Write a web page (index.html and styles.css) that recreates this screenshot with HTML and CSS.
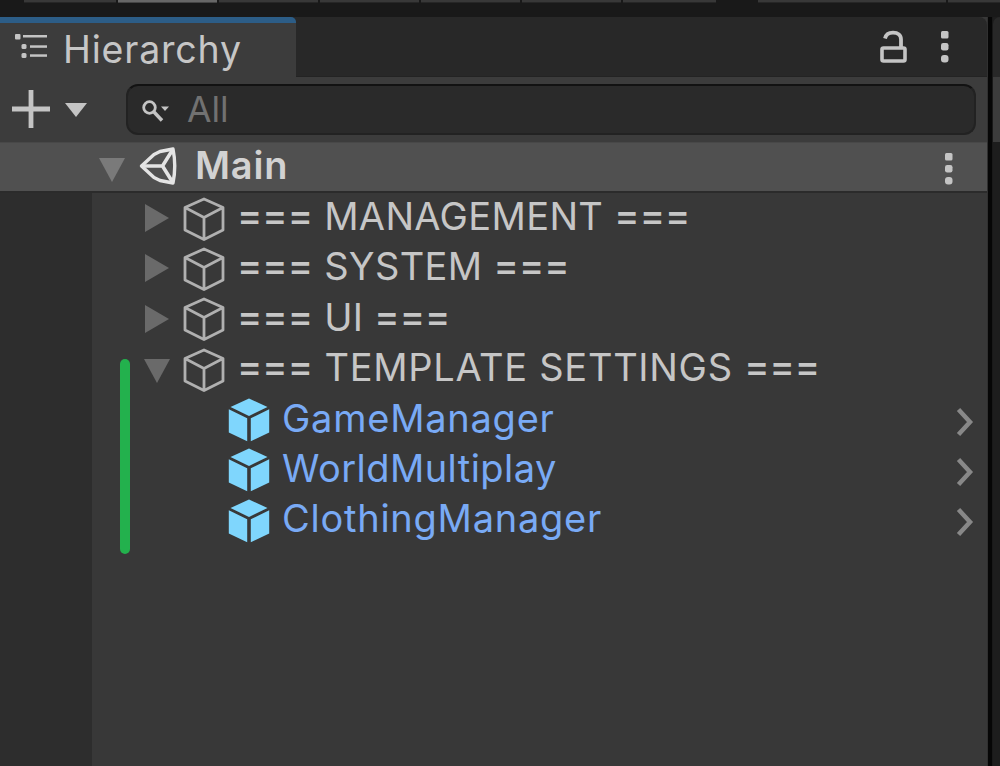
FILE: index.html
```html
<!DOCTYPE html>
<html lang="en">
<head>
<meta charset="utf-8">
<title>Hierarchy</title>
<link rel="stylesheet" href="styles.css">
</head>
<body>
<svg class="defs" width="0" height="0" aria-hidden="true">
  <symbol id="cube" viewBox="0 0 42 44">
    <path d="M21 2 40 10.500V33L21 42.500 2 33V10.500ZM2 10.500 21 20.500 40 10.500M21 20.500V42.500" fill="none" stroke="#b0b0b0" stroke-width="2.800" stroke-linejoin="round"/>
  </symbol>
  <symbol id="prefab" viewBox="0 0 42 44">
    <path d="M21 .5 39.500 9 21 18 2.500 9ZM.8 11.300 19.200 20.300V43.300L.8 34.500ZM41.200 11.300 22.800 20.300V43.300L41.200 34.500Z" fill="#7fd6fd"/>
  </symbol>
  <symbol id="closed" viewBox="0 0 26 30"><path d="M1 1 25 15 1 29Z" fill="#6a6a6a"/></symbol>
  <symbol id="open" viewBox="0 0 28 26"><path d="M1 1H27L14 25Z" fill="#6a6a6a"/></symbol>
  <symbol id="dots" viewBox="0 0 10 34"><g fill="#c4c4c4"><rect x="1" y="1" width="7.500" height="7.500" rx="1.500"/><rect x="1" y="13" width="7.500" height="7.500" rx="2.200"/><rect x="1" y="25" width="7.500" height="7.500" rx="3"/></g></symbol>
  <symbol id="chevron" viewBox="0 0 18 30"><path d="M2.500 2.500 14 15 2.500 27.500" fill="none" stroke="#888" stroke-width="4.500"/></symbol>
</svg>
<div class="window">
  <div class="strip"><i class="s1"></i><i class="s2 lit"></i><i class="s3"></i><i class="s4"></i><i class="s5"></i><i class="s6"></i><i class="s7"></i><i class="s8"></i><i class="s9"></i></div>
  <div class="docks">
    <section class="panel">
      <header class="tabs">
        <div class="tab">
          <svg class="list-icon" viewBox="0 0 34 27"><g fill="#c4c4c4"><rect x="1" y="1" width="5.500" height="5.500" rx="1"/><rect x="9" y="2" width="24" height="2.500"/><rect x="7.500" y="11" width="5" height="5" rx="1.500"/><rect x="16" y="12.300" width="17" height="2.500"/><rect x="7.500" y="20" width="5" height="5" rx="1.500"/><rect x="16" y="21.300" width="17" height="2.500"/></g></svg>
          <span class="tab-title">Hierarchy</span>
        </div>
        <div class="tab-actions">
          <svg class="lock" viewBox="0 0 28 34"><path d="M5 8.500C6 4 9 2.700 13 2.700C18 2.700 21 5 21 9.500V18" fill="none" stroke="#c4c4c4" stroke-width="3.800"/><rect x="2" y="18" width="23" height="13" rx="1.500" fill="none" stroke="#c4c4c4" stroke-width="3.600"/></svg>
          <svg class="dots"><use href="#dots"/></svg>
        </div>
      </header>
      <div class="toolbar">
        <svg class="plus" viewBox="0 0 38 38"><path d="M19 0V38M0 19H38" stroke="#c4c4c4" stroke-width="4.800"/></svg>
        <svg class="drop" viewBox="0 0 22 14"><path d="M0 0H22L11 14Z" fill="#c4c4c4"/></svg>
        <div class="search">
          <svg class="glass" viewBox="0 0 28 24"><circle cx="7.500" cy="7.500" r="5.800" fill="none" stroke="#c4c4c4" stroke-width="2.800"/><path d="M12 12 20 20.500" stroke="#c4c4c4" stroke-width="3.500"/><path d="M19 6.500H27L23 11Z" fill="#c4c4c4"/></svg>
          <span class="placeholder">All</span>
        </div>
      </div>
      <div class="scene">
        <svg class="scene-arrow"><use href="#open"/></svg>
        <svg class="unity" viewBox="0 0 38 38"><path d="M2 19H22.500L32.500 3M22.500 19 32.500 35" fill="none" stroke="#e4e4e4" stroke-width="3.600"/><path d="M1.500 19 14 7.500 20 4.500 33 2Q36.500 19 33 36L20 33.500 14 30.500Z" fill="none" stroke="#e4e4e4" stroke-width="3.400" stroke-linejoin="round"/></svg>
        <span class="scene-name">Main</span>
        <svg class="dots"><use href="#dots"/></svg>
      </div>
      <div class="tree">
        <div class="gutter"></div>
        <div class="rows">
          <div class="row"><svg class="arrow"><use href="#closed"/></svg><svg class="cube"><use href="#cube"/></svg><span class="label"><span class="eq">===</span> MANAGEMENT <span class="eq">===</span></span></div>
          <div class="row"><svg class="arrow"><use href="#closed"/></svg><svg class="cube"><use href="#cube"/></svg><span class="label"><span class="eq">===</span> SYSTEM <span class="eq">===</span></span></div>
          <div class="row"><svg class="arrow"><use href="#closed"/></svg><svg class="cube"><use href="#cube"/></svg><span class="label"><span class="eq">===</span> UI <span class="eq">===</span></span></div>
          <div class="row"><svg class="arrow down"><use href="#open"/></svg><svg class="cube"><use href="#cube"/></svg><span class="label wide"><span class="eq">===</span> TEMPLATE SETTINGS <span class="eq">===</span></span></div>
          <div class="row child"><svg class="cube"><use href="#prefab"/></svg><span class="label">GameManager</span><svg class="chevron"><use href="#chevron"/></svg></div>
          <div class="row child"><svg class="cube"><use href="#prefab"/></svg><span class="label tight">WorldMultiplay</span><svg class="chevron"><use href="#chevron"/></svg></div>
          <div class="row child"><svg class="cube"><use href="#prefab"/></svg><span class="label">ClothingManager</span><svg class="chevron"><use href="#chevron"/></svg></div>
          <div class="marker"></div>
        </div>
      </div>
    </section>
    <div class="divider"></div>
    <aside class="neighbor"><div class="neighbor-tab"></div><div class="neighbor-bar"></div></aside>
  </div>
</div>
</body>
</html>
```

FILE: styles.css
```css
* { box-sizing: border-box; }
body { margin: 0; background: #191919; }
svg { display: block; flex: none; overflow: visible; }
.defs { position: absolute; }
.window {
  width: 1000px; height: 766px; overflow: hidden;
  display: flex; flex-direction: column;
  font-family: Inter, "Liberation Sans", sans-serif;
  font-size: 38px; line-height: 50px; color: #c6c6c6;
  font-feature-settings: "calt" 0;
}
.strip { height: 17px; flex: none; display: flex; gap: 2px; padding-left: 24px; background: #191919; }
.strip i { height: 3px; background: #383838; border-bottom: 1px solid #262626; }
.strip .lit { background: #676767; border-color: #454545; }
.s1 { width: 92px; }
.s2, .s3, .s4, .s5, .s6 { width: 99px; }
.s7 { width: 93px; }
.strip .s8 { width: 188px; margin-left: 40px; }
.strip .s9 { flex: 1; }
.docks { flex: 1; display: flex; min-height: 0; }
.panel { width: 988px; display: flex; flex-direction: column; background: #383838; border-right: 1px solid #303030; }
.tabs { height: 60px; flex: none; display: flex; justify-content: space-between; background: #282828; border-radius: 0 8px 0 0; border-bottom: 1px solid #232323; }
.tab { width: 296px; height: 61px; display: flex; align-items: flex-start; padding: 0 0 0 14px; background: #3c3c3c; border-top: 6px solid #2c5d87; border-radius: 0 5px 0 0; }
.list-icon { width: 34px; height: 27px; margin-top: 10px; }
.tab-title { margin: 2px 0 0 15px; font-size: 37.5px; letter-spacing: .8px; }
.tab-actions { display: flex; gap: 32px; padding: 13px 37px 0 0; }
.lock { width: 28px; height: 34px; }
.dots { width: 10px; height: 34px; }
.toolbar { height: 65px; flex: none; display: flex; background: #3c3c3c; padding-left: 12px; }
.plus { width: 38px; height: 38px; margin-top: 13px; }
.drop { width: 22px; height: 14px; margin: 26px 0 0 15px; }
.search { width: 850px; height: 51px; margin: 7px 0 0 39px; display: flex; background: #2a2a2a; border: 2px solid #222; border-top-color: #121212; border-radius: 12px; }
.glass { width: 28px; height: 24px; margin: 14px 0 0 14px; }
.placeholder { margin-left: 17px; color: #717171; font-size: 35.5px; line-height: 48px; }
.scene { height: 51px; flex: none; display: flex; background: #505050; border-top: 1px solid #484848; border-bottom: 2px solid #2b2b2b; padding-left: 98px; }
.scene-arrow { width: 28px; height: 26px; margin-top: 14px; }
.scene-arrow use { filter: brightness(1.15); }
.unity { width: 38px; height: 38px; margin: 4px 0 0 14px; }
.scene-name { font-weight: 600; color: #d2d2d2; margin-left: 17px; line-height: 45px; letter-spacing: .8px; }
.scene .dots { margin: 9px 33px 0 auto; }
.tree { flex: 1; display: flex; min-height: 0; }
.gutter { width: 92px; background: #2d2d2d; }
.rows { flex: 1; position: relative; }
.row { height: 50.4px; display: flex; align-items: flex-start; padding-left: 52px; }
.row.child { padding-left: 136px; color: #79aaf5; }
.arrow { width: 26px; height: 30px; margin: 10px 13px 0 0; }
.arrow.down { width: 28px; height: 26px; margin: 14px 12px 0 -1px; }
.cube { width: 42px; height: 44px; margin-top: 3.5px; }
.label { margin-left: 12px; line-height: 46px; letter-spacing: .35px; }
.label.wide { letter-spacing: .7px; }
.child .label { letter-spacing: .75px; }
.child .label.tight { letter-spacing: .45px; }
.eq { letter-spacing: 0; font-weight: 500; vertical-align: 1px; line-height: 1; }
.chevron { width: 18px; height: 30px; margin: 12px 13px 0 auto; }
.marker { position: absolute; left: 28px; top: 166px; width: 10px; height: 195px; border-radius: 5px; background: #23b14d; }
.divider { width: 5px; background: #060606; border-right: 1px solid #191919; }
.neighbor { flex: 1; background: #1d1d1d; }
.neighbor-tab { height: 60px; background: #282828; border-radius: 7px 0 0 0; }
.neighbor-bar { height: 65px; background: #3c3c3c; }
```
